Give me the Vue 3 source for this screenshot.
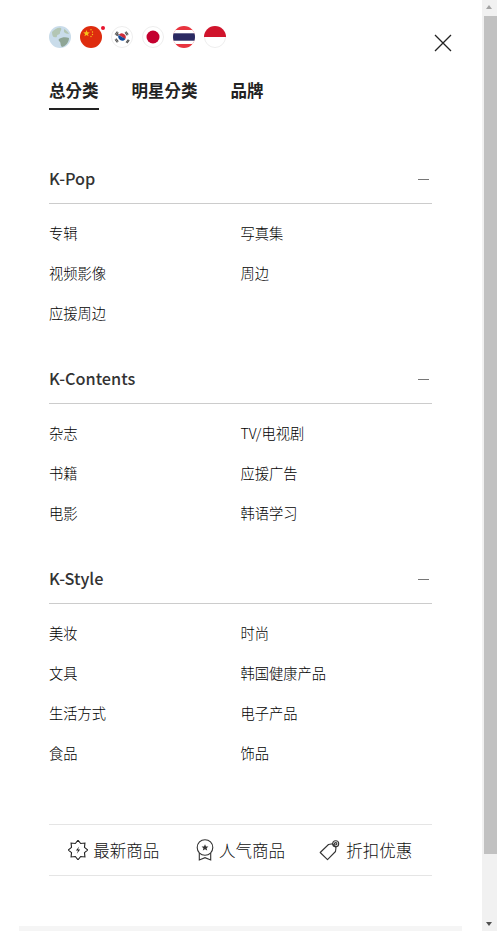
<script setup>
const sections = [
  { title: 'K-Pop', items: ['专辑', '写真集', '视频影像', '周边', '应援周边'] },
  { title: 'K-Contents', items: ['杂志', 'TV/电视剧', '书籍', '应援广告', '电影', '韩语学习'] },
  { title: 'K-Style', items: ['美妆', '时尚', '文具', '韩国健康产品', '生活方式', '电子产品', '食品', '饰品'] },
]
const tabs = ['总分类', '明星分类', '品牌']
const burst = Array.from({ length: 16 }, (_, i) => {
  const r = i % 2 ? 7 : 9.8
  const a = (i * Math.PI) / 8 - Math.PI / 2
  return `${(10 + r * Math.cos(a)).toFixed(2)},${(10 + r * Math.sin(a)).toFixed(2)}`
}).join(' ')
</script>

<template>
  <div class="page">
    <header class="top">
      <div class="flags">
        <svg class="flag" viewBox="0 0 22 22">
          <circle cx="11" cy="11" r="11" fill="#c9dcea" />
          <path d="M3 6c3-3 6-5 9-4 1 2-1 3-1 5s-3 1-3 3-2 1-3 1-2-2-2-5z" fill="#b3c6b4" />
          <path d="M10 13c3-2 7-2 10-1 0 4-3 8-7 9-2-2-1-4-2-5s-2-2-1-3z" fill="#8ea595" />
          <path d="M15 3c2 1 4 3 5 5-2 0-4-1-5-2z" fill="#b3c6b4" />
        </svg>
        <span class="flag-wrap">
          <svg class="flag" viewBox="0 0 22 22">
            <circle cx="11" cy="11" r="11" fill="#de2c0e" />
            <path d="M6.500 4l.9 2.300 2.400.1-1.900 1.500.7 2.400-2.100-1.400-2.100 1.400.7-2.400-1.900-1.500 2.400-.1z" fill="#f6c21c" />
            <circle cx="11" cy="3.800" r=".7" fill="#f6c21c" />
            <circle cx="12.500" cy="6" r=".7" fill="#f6c21c" />
            <circle cx="12.500" cy="8.500" r=".7" fill="#f6c21c" />
            <circle cx="11" cy="10.500" r=".7" fill="#f6c21c" />
          </svg>
          <i class="dot"></i>
        </span>
        <svg class="flag" viewBox="0 0 22 22">
          <circle cx="11" cy="11" r="10.500" fill="#fff" stroke="#eee" />
          <path d="M7.700 8.800a4 4 0 0 1 6.600 4.400z" fill="#cd2e3a" />
          <path d="M7.700 8.800a4 4 0 0 0 6.600 4.400c-1-1.400-2.200-1.500-3.300-2.200s-2.300-.9-3.300-2.200z" fill="#0f4c9c" />
          <g stroke="#555" stroke-width="1.100">
            <path d="M4 8.500l2.300-3M5 9.300l2.300-3M6 10l1.500-2" />
            <path d="M15 5.500l2.300 3M14 6.300l2.300 3" />
            <path d="M4 13.500l2.300 3M5 12.700l2.300 3" />
            <path d="M15 16.500l2.300-3M16 17.200l2.300-3" />
          </g>
        </svg>
        <svg class="flag" viewBox="0 0 22 22">
          <circle cx="11" cy="11" r="10.500" fill="#fff" stroke="#eee" />
          <circle cx="11" cy="11" r="6.500" fill="#c4002f" />
        </svg>
        <svg class="flag" viewBox="0 0 22 22">
          <clipPath id="thai"><circle cx="11" cy="11" r="11" /></clipPath>
          <g clip-path="url(#thai)">
            <rect width="22" height="22" fill="#e8343f" />
            <rect y="4" width="22" height="14" fill="#fff" />
            <rect y="7.300" width="22" height="7.400" fill="#2b2a62" />
          </g>
        </svg>
        <svg class="flag" viewBox="0 0 22 22">
          <circle cx="11" cy="11" r="10.500" fill="#fff" stroke="#eee" />
          <path d="M0 11a11 11 0 0 1 22 0z" fill="#d0142c" />
        </svg>
      </div>
      <button class="close" aria-label="close">
        <svg viewBox="0 0 18 18" width="18" height="18">
          <path d="M1 1l16 16M17 1L1 17" stroke="#222" stroke-width="1.300" fill="none" />
        </svg>
      </button>
    </header>

    <nav class="tabs">
      <span v-for="(t, i) in tabs" :key="t" class="tab" :class="{ active: i === 0 }">{{ t }}</span>
    </nav>

    <section v-for="s in sections" :key="s.title" class="section">
      <div class="head">
        <h3>{{ s.title }}</h3>
        <i class="minus"></i>
      </div>
      <ul class="list">
        <li v-for="item in s.items" :key="item">{{ item }}</li>
      </ul>
    </section>

    <div class="links">
      <a class="link new">
        <svg width="20" height="20" viewBox="0 0 20 20" fill="none" stroke="#222" stroke-width="1.100">
          <polygon :points="burst" stroke-linejoin="miter" />
          <path d="M11.200 6.500L7.900 10.600h2.200L8.800 13.700l3.400-4.300H10z" fill="#222" stroke="none" />
        </svg>
        <span>最新商品</span>
      </a>
      <a class="link">
        <svg width="18" height="22" viewBox="0 0 18 22" fill="none" stroke="#333" stroke-width="1.100">
          <circle cx="9" cy="8.500" r="7.800" />
          <path d="M9 5.200l1 2.200 2.400.2-1.800 1.600.6 2.300L9 10.300l-2.200 1.200.6-2.300-1.800-1.600L8 7.400z" fill="#333" stroke="none" />
          <path d="M3.300 14v7l5.700-2.300 5.700 2.300v-7" />
        </svg>
        <span>人气商品</span>
      </a>
      <a class="link sale">
        <svg width="21" height="21" viewBox="0 0 21 21" fill="none" stroke="#333" stroke-width="1.100">
          <path d="M9.500 4.500L13.500 3.800 17 7.500 16.500 11.500 8.500 19.700 1.200 12.500z" stroke-linejoin="round" />
          <circle cx="16.700" cy="3.800" r="3" />
          <circle cx="16.700" cy="3.800" r="1.200" />
        </svg>
        <span>折扣优惠</span>
      </a>
    </div>

    <div class="strip"></div>

    <div class="scrollbar">
      <i class="arrow up"></i>
      <i class="thumb"></i>
      <i class="arrow down"></i>
    </div>
  </div>
</template>

<style>
html, body { margin: 0; background: #fff; }
</style>

<style scoped>
.page {
  position: relative;
  box-sizing: border-box;
  width: 497px;
  height: 931px;
  overflow: hidden;
  padding: 26px 65px 0 49px;
  font-family: "Noto Sans CJK KR", "Noto Sans CJK SC", "Noto Sans", sans-serif;
  color: #222;
  background: #fff;
}
.top { display: flex; justify-content: space-between; height: 22px; }
.flags { display: flex; gap: 9px; }
.flag { display: block; width: 22px; height: 22px; }
.flag-wrap { position: relative; display: block; width: 22px; height: 22px; }
.dot {
  position: absolute; right: -3px; top: 0;
  width: 4px; height: 4px; border-radius: 50%; background: #e8132e;
}
.close {
  position: absolute; left: 434px; top: 34px;
  padding: 0; border: 0; background: none; display: block; line-height: 0;
}
.tabs { display: flex; gap: 33px; margin-top: 28px; height: 34px; }
.tab { font-size: 16.500px; font-weight: 700; line-height: 29px; height: 34px; box-sizing: border-box; }
.tab.active { border-bottom: 2px solid #222; }
.section { margin-top: 21px; }
.tabs + .section { margin-top: 45px; }
.head {
  display: flex; align-items: center; justify-content: space-between;
  height: 48px; border-bottom: 1px solid #ccc; padding-right: 3px;
}
h3 { margin: 0; font-size: 16.300px; font-weight: 500; line-height: 44px; height: 46px; color: #333; }
.minus { display: block; width: 11px; height: 1px; background: #777; }
.list {
  list-style: none; margin: 0; padding: 10px 0 0;
  display: grid; grid-template-columns: 1fr 1fr;
}
.list li { height: 40px; line-height: 38px; font-size: 14.250px; color: #000; font-weight: 300; }
.links {
  display: grid; grid-template-columns: repeat(3, 1fr);
  margin-top: 50px; height: 50px;
  border-top: 1px solid #e5e5e5; border-bottom: 1px solid #e5e5e5;
}
.link {
  display: flex; align-items: center; justify-content: center; gap: 5px;
  font-size: 16.500px; font-weight: 300; color: #111;
}
.link.new { padding-left: 2px; }
.link.sale { gap: 6px; padding-right: 5px; }
.strip { height: 10px; margin: 50px -30px 0 -30px; background: #f5f5f5; }
.scrollbar {
  position: absolute; top: 0; right: 0; bottom: 0;
  width: 15px; background: #f1f1f1;
}
.thumb { position: absolute; left: 2px; right: 0; top: 16px; height: 838px; background: #c1c1c1; }
.arrow {
  position: absolute; left: 3.500px; width: 0; height: 0;
  border-left: 3.500px solid transparent; border-right: 3.500px solid transparent;
}
.arrow.up { top: 5px; border-bottom: 4px solid #a3a3a3; }
.arrow.down { bottom: 5px; border-top: 4px solid #505050; }
</style>
